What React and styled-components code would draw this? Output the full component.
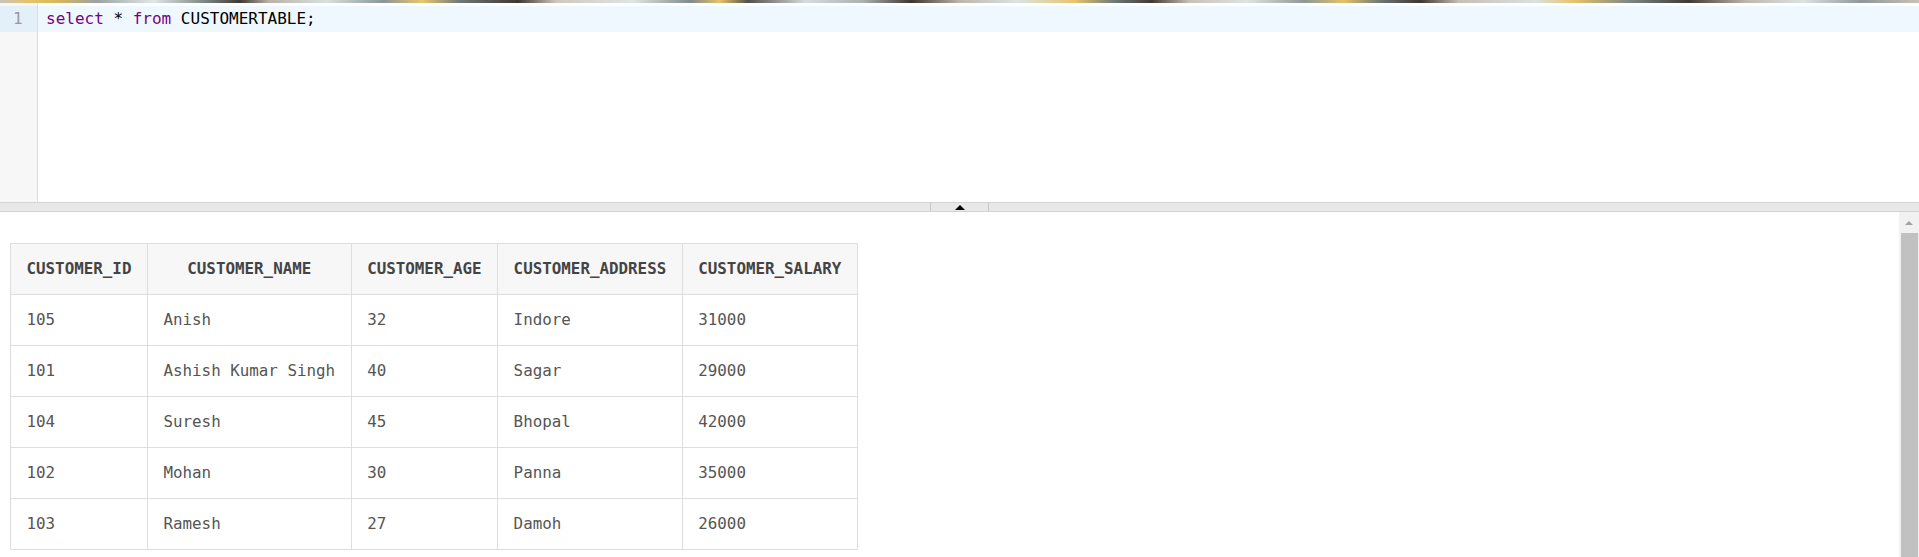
import React from "react";
import styled, { createGlobalStyle } from "styled-components";

const Global = createGlobalStyle`
  html, body { margin: 0; padding: 0; background: #fff; }
  body { font-family: "DejaVu Sans Mono", "Liberation Mono", monospace; }
`;

const Page = styled.div`
  width: 1919px;
  height: 557px;
  display: flex;
  flex-direction: column;
  overflow: hidden;
`;

const PhotoStrip = styled.div`
  height: 3px;
  flex: none;
  background: linear-gradient(
    90deg,
    #c9c4bd 0%, #e5c46a 1.5%, #d9b75c 3%, #9aa3a3 5%, #dfe7e7 8%,
    #6f7b7a 11%, #3f3833 12.5%, #b9b2aa 14%, #d7e1e0 17%, #8a9696 20%,
    #e7c76e 22%, #6d7878 24%, #3e3631 27%, #cfc8bf 29%, #dde6e5 33%,
    #7f8b8a 36%, #e4c26a 37.5%, #53504b 39%, #d5dede 42%, #a8b2b1 45%,
    #3c3530 47.5%, #bdb5ac 50%, #dbe4e4 53%, #e6c56b 56%, #707c7b 58%,
    #413934 60%, #c8c1b8 62%, #dce5e4 65%, #8c9897 68%, #e3c168 70%,
    #6b7676 72%, #3d3530 74%, #c5beb5 76%, #d9e2e2 80%, #e5c46b 82%,
    #7a8685 85%, #403833 88%, #bfb8af 91%, #dae3e3 94%, #8d9898 97%, #c9c2b9 100%
  );
`;

const Editor = styled.div`
  height: 199px;
  flex: none;
  display: flex;
  background: #fff;
`;

const Gutter = styled.div`
  width: 37px;
  flex: none;
  background: #f7f7f7;
  border-right: 1px solid #dddddd;
  padding-top: 3px;
  box-sizing: content-box;
`;

const LineNumber = styled.div`
  height: 26px;
  line-height: 26px;
  padding-left: 13px;
  font-size: 16px;
  color: #999;
  background: ${(p) => (p.$active ? "#e3eff9" : "transparent")};
`;

const CodeArea = styled.div`
  flex: 1;
  padding-top: 3px;
`;

const CodeLine = styled.div`
  height: 26px;
  line-height: 26px;
  padding-left: 8px;
  font-size: 16px;
  color: #000;
  white-space: pre;
  background: ${(p) => (p.$active ? "#eff8fe" : "transparent")};
`;

const Keyword = styled.span`
  color: #770088;
`;

const ResizeBar = styled.div`
  height: 8px;
  flex: none;
  background: #e8e8e8;
  border-top: 1px solid #d3d3d3;
  border-bottom: 1px solid #d3d3d3;
  display: flex;
  justify-content: center;
`;

const Handle = styled.div`
  width: 57px;
  border-left: 1px solid #c6c6c6;
  border-right: 1px solid #c6c6c6;
  display: flex;
  justify-content: center;
  align-items: flex-end;
  padding-bottom: 1px;
`;

const Results = styled.div`
  flex: 1;
  display: flex;
  min-height: 0;
`;

const ResultsBody = styled.div`
  flex: 1;
  padding: 31px 0 0 10px;
  overflow: hidden;
`;

const Table = styled.table`
  border-collapse: collapse;
  border: 1px solid #dedede;
  font-family: "DejaVu Sans Mono", "Liberation Mono", monospace;
  font-size: 15.85px;
`;

const Th = styled.th`
  background: #f7f7f7;
  color: #444;
  font-weight: bold;
  text-align: center;
  padding: 15px 15.5px;
  line-height: 20px;
  border: 1px solid #dedede;
  white-space: nowrap;
`;

const Td = styled.td`
  color: #555;
  text-align: left;
  padding: 15px 15.5px;
  line-height: 20px;
  border: 1px solid #dedede;
  white-space: nowrap;
`;

const Scrollbar = styled.div`
  width: 20px;
  flex: none;
  background: #f1f1f1;
  display: flex;
  flex-direction: column;
`;

const ScrollArrow = styled.div`
  height: 21px;
  flex: none;
  display: flex;
  justify-content: center;
  align-items: center;
`;

const ScrollThumb = styled.div`
  flex: 1;
  margin: 0 1px 0 2px;
  background: #c1c1c1;
`;

const columns = [
  "CUSTOMER_ID",
  "CUSTOMER_NAME",
  "CUSTOMER_AGE",
  "CUSTOMER_ADDRESS",
  "CUSTOMER_SALARY",
];

const rows = [
  ["105", "Anish", "32", "Indore", "31000"],
  ["101", "Ashish Kumar Singh", "40", "Sagar", "29000"],
  ["104", "Suresh", "45", "Bhopal", "42000"],
  ["102", "Mohan", "30", "Panna", "35000"],
  ["103", "Ramesh", "27", "Damoh", "26000"],
];

export default function App() {
  return (
    <>
      <Global />
      <Page>
        <PhotoStrip />
        <Editor>
          <Gutter>
            <LineNumber $active>1</LineNumber>
          </Gutter>
          <CodeArea>
            <CodeLine $active>
              <Keyword>select</Keyword> * <Keyword>from</Keyword> CUSTOMERTABLE;
            </CodeLine>
          </CodeArea>
        </Editor>
        <ResizeBar>
          <Handle>
            <svg width="10" height="5" viewBox="0 0 10 5">
              <polygon points="5,0 10,5 0,5" fill="#000" />
            </svg>
          </Handle>
        </ResizeBar>
        <Results>
          <ResultsBody>
            <Table>
              <thead>
                <tr>
                  {columns.map((c) => (
                    <Th key={c}>{c}</Th>
                  ))}
                </tr>
              </thead>
              <tbody>
                {rows.map((r) => (
                  <tr key={r[0]}>
                    {r.map((v, i) => (
                      <Td key={i}>{v}</Td>
                    ))}
                  </tr>
                ))}
              </tbody>
            </Table>
          </ResultsBody>
          <Scrollbar>
            <ScrollArrow>
              <svg width="8" height="4" viewBox="0 0 8 4">
                <polygon points="4,0 8,4 0,4" fill="#a3a3a3" />
              </svg>
            </ScrollArrow>
            <ScrollThumb />
          </Scrollbar>
        </Results>
      </Page>
    </>
  );
}
